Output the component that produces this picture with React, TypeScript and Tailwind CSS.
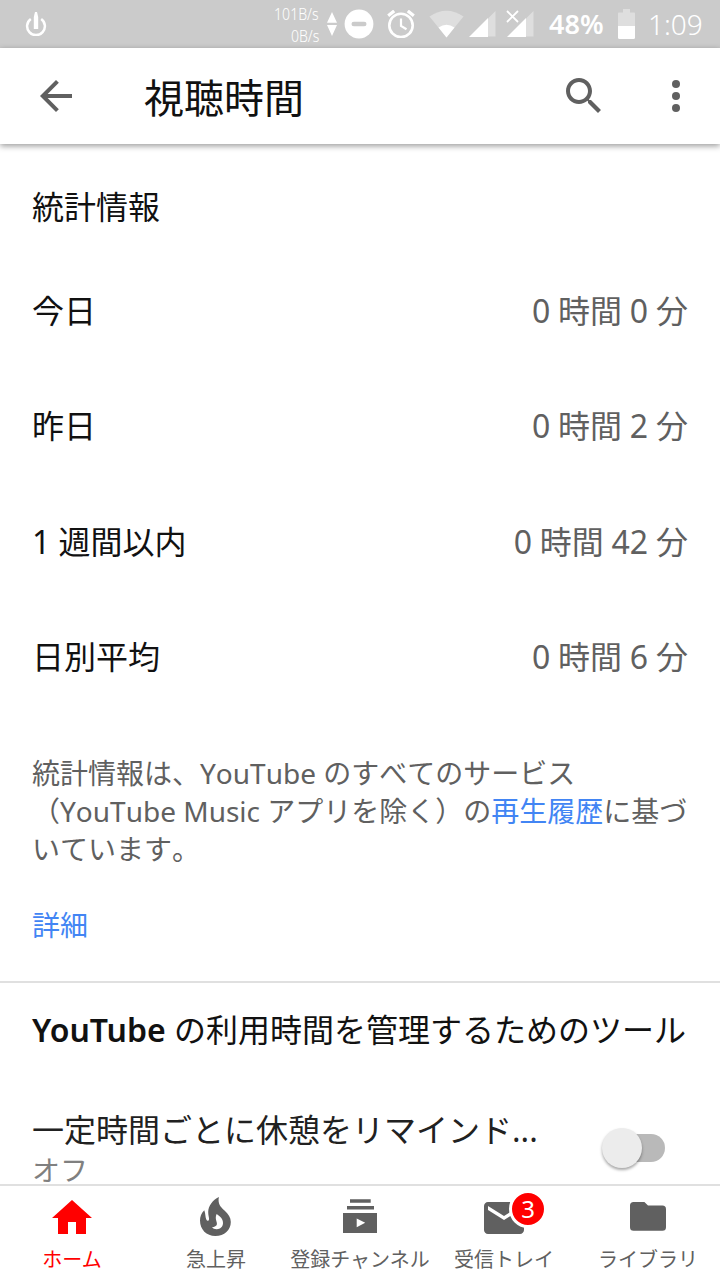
import type { ReactNode } from "react";

const stats = [
  { label: "今日", value: "0 時間 0 分" },
  { label: "昨日", value: "0 時間 2 分" },
  { label: "1 週間以内", value: "0 時間 42 分" },
  { label: "日別平均", value: "0 時間 6 分" },
];

function StatusBar() {
  return (
    <div className="flex h-12 shrink-0 items-center bg-[#cbcbcb] text-white">
      <svg className="ml-6 h-6 w-6" viewBox="0 0 24 24" fill="none" stroke="#fff">
        <path d="M6.800 7A8.900 8.900 0 1 0 17.200 7" strokeWidth="2.500" />
        <path d="M11 0h2l1.200 5v12H9.800V5z" fill="#fff" stroke="none" />
      </svg>
      <div className="ml-auto flex w-[60px] flex-col items-end whitespace-nowrap pt-[2px] text-right text-[16px] leading-[22px] font-light">
        <span className="origin-right scale-x-[0.88]">101B/s</span>
        <span className="origin-right scale-x-[0.88]">0B/s</span>
      </div>
      <svg className="ml-2 h-6 w-[10px]" viewBox="0 0 10 24" fill="#fff">
        <path d="M5 0l5 10.700H0zM0 13h10L5 24z" />
      </svg>
      <svg className="ml-[7px] h-[30px] w-[30px]" viewBox="0 0 30 30">
        <circle cx="15" cy="15" r="14.400" fill="#fff" />
        <rect x="7.500" y="12.700" width="15" height="4.600" rx="2.300" fill="#cbcbcb" />
      </svg>
      <svg className="ml-[13px] h-7 w-7" viewBox="0 0 28 28" fill="none" stroke="#fff">
        <circle cx="14" cy="15.400" r="11.700" strokeWidth="2.600" />
        <path d="M14 8.500v7.400l5.500 3.400" strokeWidth="2.200" />
        <path d="M1.200 5.700l6-4.800M26.800 5.700l-6-4.800" strokeWidth="3.200" />
      </svg>
      <svg className="ml-[14px] h-7 w-[35px]" viewBox="0 0 35 28">
        <path d="M0.500 6.500Q17.500 -5 34.500 6.500L17.500 27.500z" fill="#dedede" />
        <path d="M9.500 17.500Q17.500 12 25.500 17.500L17.500 27.500z" fill="#fff" />
      </svg>
      <svg className="ml-[5px] h-7 w-[27px]" viewBox="0 0 27 28">
        <path d="M26.500 1v25.500h-7.500V8.500z" fill="#dedede" />
        <path d="M0 27L19 8v19z" fill="#fff" />
      </svg>
      <svg className="ml-[10px] h-7 w-7" viewBox="0 0 28 28">
        <path d="M27.500 1v25.500H20V8.500z" fill="#dedede" />
        <path d="M1 27L20 8v19z" fill="#fff" />
        <path d="M1 1l11 11M12 1L1 12" stroke="#fff" strokeWidth="1.800" />
      </svg>
      <span className="ml-[15px] w-[57px] whitespace-nowrap text-[27px] leading-8 font-semibold">48%</span>
      <svg className="ml-[12px] h-[30px] w-[17px]" viewBox="0 0 17 30">
        <path d="M5 0h7v3.500h4a1 1 0 0 1 1 1V17H0V4.500a1 1 0 0 1 1-1h4z" fill="#dedede" />
        <path d="M0 17h17v11.500a1.500 1.500 0 0 1-1.500 1.500h-14A1.500 1.500 0 0 1 0 28.500z" fill="#fff" />
      </svg>
      <span className="ml-[13px] mr-[17px] w-[55px] whitespace-nowrap text-[28px] leading-8 font-light">1:09</span>
    </div>
  );
}

function AppBar() {
  return (
    <header className="relative z-10 flex h-24 shrink-0 items-center bg-white pl-8 pr-5 text-[#606060] shadow-[0_2px_6px_rgba(0,0,0,0.4)]">
      <svg className="h-12 w-12" viewBox="0 0 24 24" fill="currentColor">
        <path d="M20 11H7.830l5.590-5.590L12 4l-8 8 8 8 1.410-1.410L7.830 13H20v-2z" />
      </svg>
      <h1 className="ml-16 pt-[3px] text-[40px] leading-[56px] font-normal text-[#111]">視聴時間</h1>
      <svg className="ml-auto h-12 w-12" viewBox="0 0 24 24" fill="currentColor">
        <path d="M15.500 14h-.790l-.280-.270C15.410 12.590 16 11.110 16 9.500 16 5.910 13.090 3 9.500 3S3 5.910 3 9.500 5.910 16 9.500 16c1.610 0 3.090-.590 4.230-1.570l.270.280v.790l5 4.990L20.490 19l-4.990-5zm-6 0C7.010 14 5 11.990 5 9.500S7.010 5 9.500 5 14 7.010 14 9.500 11.990 14 9.500 14z" />
      </svg>
      <svg className="ml-11 h-12 w-12" viewBox="0 0 24 24" fill="currentColor">
        <circle cx="12" cy="6" r="2" />
        <circle cx="12" cy="12" r="2" />
        <circle cx="12" cy="18" r="2" />
      </svg>
    </header>
  );
}

function Tab({ label, active, children }: { label: string; active?: boolean; children: ReactNode }) {
  return (
    <div className={`flex w-36 flex-col items-center ${active ? "text-[#f00]" : "text-[#606060]"}`}>
      <div className="mt-2 h-12 w-12">{children}</div>
      <span className="mt-1 whitespace-nowrap text-[20px] leading-7">{label}</span>
    </div>
  );
}

function BottomNav() {
  return (
    <nav className="flex h-24 shrink-0 border-t-2 border-[#e0e0e0] bg-white">
      <Tab label="ホーム" active>
        <svg className="h-12 w-12" viewBox="0 0 24 24" fill="currentColor">
          <path d="M10 20v-6h4v6h5v-8h3L12 3 2 12h3v8z" />
        </svg>
      </Tab>
      <Tab label="急上昇">
        <svg className="h-12 w-12" viewBox="0 0 48 48" fill="currentColor">
          <path
            fillRule="evenodd"
            d="M26.900 3C20.500 6 16.300 12 16.200 18C16.100 21 17.300 23.500 17 25.500C16.700 27.200 15 27.200 14.300 25.500C13.200 23 13.700 20 12.300 16.200C9.300 19 8 22.500 8 26.500C8 35.500 14.500 42 23.300 42C32.300 42 38.800 36 38.800 28C38.800 23.500 36.500 20 32.500 16.500C28.500 13 25.500 9.500 26.900 3ZM24.600 20C28.500 22.500 31.200 25.200 31 29.300C30.800 33 28 35.400 24.500 35.200C22.500 35.100 21 34.400 20 33.200C22.500 33 24.600 32.200 24.900 30.300C25.300 27.500 22.500 25 24.600 20Z"
          />
        </svg>
      </Tab>
      <Tab label="登録チャンネル">
        <svg className="h-12 w-12" viewBox="0 0 48 48" fill="currentColor">
          <path d="M14 5.200h20.700v3.600H14zM11 12h27v3.500H11zM7 19h34v20H7zM20.700 24.500v8.700l8.500-4.350z" fillRule="evenodd" />
        </svg>
      </Tab>
      <Tab label="受信トレイ">
        <div className="relative h-12 w-12">
          <svg className="h-12 w-12" viewBox="0 0 24 24" fill="currentColor">
            <path d="M20 4H4c-1.100 0-2 .900-2 2v12c0 1.100.900 2 2 2h16c1.100 0 2-.900 2-2V6c0-1.100-.900-2-2-2zm0 4l-8 5-8-5V6l8 5 8-5v2z" />
          </svg>
          <span className="absolute left-[29px] top-[-4px] flex h-[38px] w-[38px] items-center justify-center rounded-full border-[3px] border-white bg-[#f00] text-[24px] leading-none text-white">3</span>
        </div>
      </Tab>
      <Tab label="ライブラリ">
        <svg className="h-12 w-12" viewBox="0 0 48 48" fill="currentColor">
          <path d="M9.600 8h10.800l3.600 3.600h14.400a3.600 3.600 0 0 1 3.600 3.600v18a3.600 3.600 0 0 1-3.600 3.600H9.600A3.600 3.600 0 0 1 6 33.200V11.600A3.600 3.600 0 0 1 9.600 8z" />
        </svg>
      </Tab>
    </nav>
  );
}

export default function App() {
  return (
    <div className="flex h-[1280px] w-[720px] flex-col overflow-hidden bg-white font-['Noto_Sans','Noto_Sans_CJK_JP',sans-serif] text-[#111]">
      <StatusBar />
      <AppBar />
      <main className="flex min-h-0 flex-1 flex-col">
        <section className="shrink-0 border-b-2 border-[#e0e0e0] px-8 pt-[43px] pb-[37px]">
          <h2 className="mb-[26px] text-[32px] leading-10 font-normal">統計情報</h2>
          {stats.map((s) => (
            <div key={s.label} className="flex h-[115.500px] items-center justify-between text-[32px] leading-10">
              <span>{s.label}</span>
              <span className="text-[#606060] [word-spacing:-0.5px]">{s.value}</span>
            </div>
          ))}
          <p className="mt-[39px] whitespace-nowrap text-[28px] leading-[38px] text-[#606060] [font-kerning:none]">
            統計情報は、YouTube のすべてのサービス
            <br />
            （YouTube Music アプリを除く）の<a className="text-[#4285f4]">再生履歴</a>に基づ
            <br />
            いています。
          </p>
          <a className="mt-[38px] block text-[28px] leading-[38px] text-[#4285f4]">詳細</a>
        </section>
        <section className="shrink-0 px-8 pt-[27px]">
          <h2 className="whitespace-nowrap text-[32px] leading-10 font-normal">
            <span className="font-semibold">YouTube</span> の利用時間を管理するためのツール
          </h2>
          <div className="mt-[58px] flex items-start justify-between">
            <div>
              <div className="whitespace-nowrap text-[32px] leading-[44px] text-[#212121]">一定時間ごとに休憩をリマインド...</div>
              <div className="mt-[3px] text-[28px] leading-[30px] text-[#808080]">オフ</div>
            </div>
            <div className="relative mr-[23px] mt-[26px] h-7 w-[58px] rounded-full bg-[#b9b9b9]">
              <span className="absolute left-[-5px] top-[-6px] h-10 w-10 rounded-full bg-[#ececec] shadow-[0_2px_3px_rgba(0,0,0,0.35)]" />
            </div>
          </div>
        </section>
      </main>
      <BottomNav />
    </div>
  );
}
